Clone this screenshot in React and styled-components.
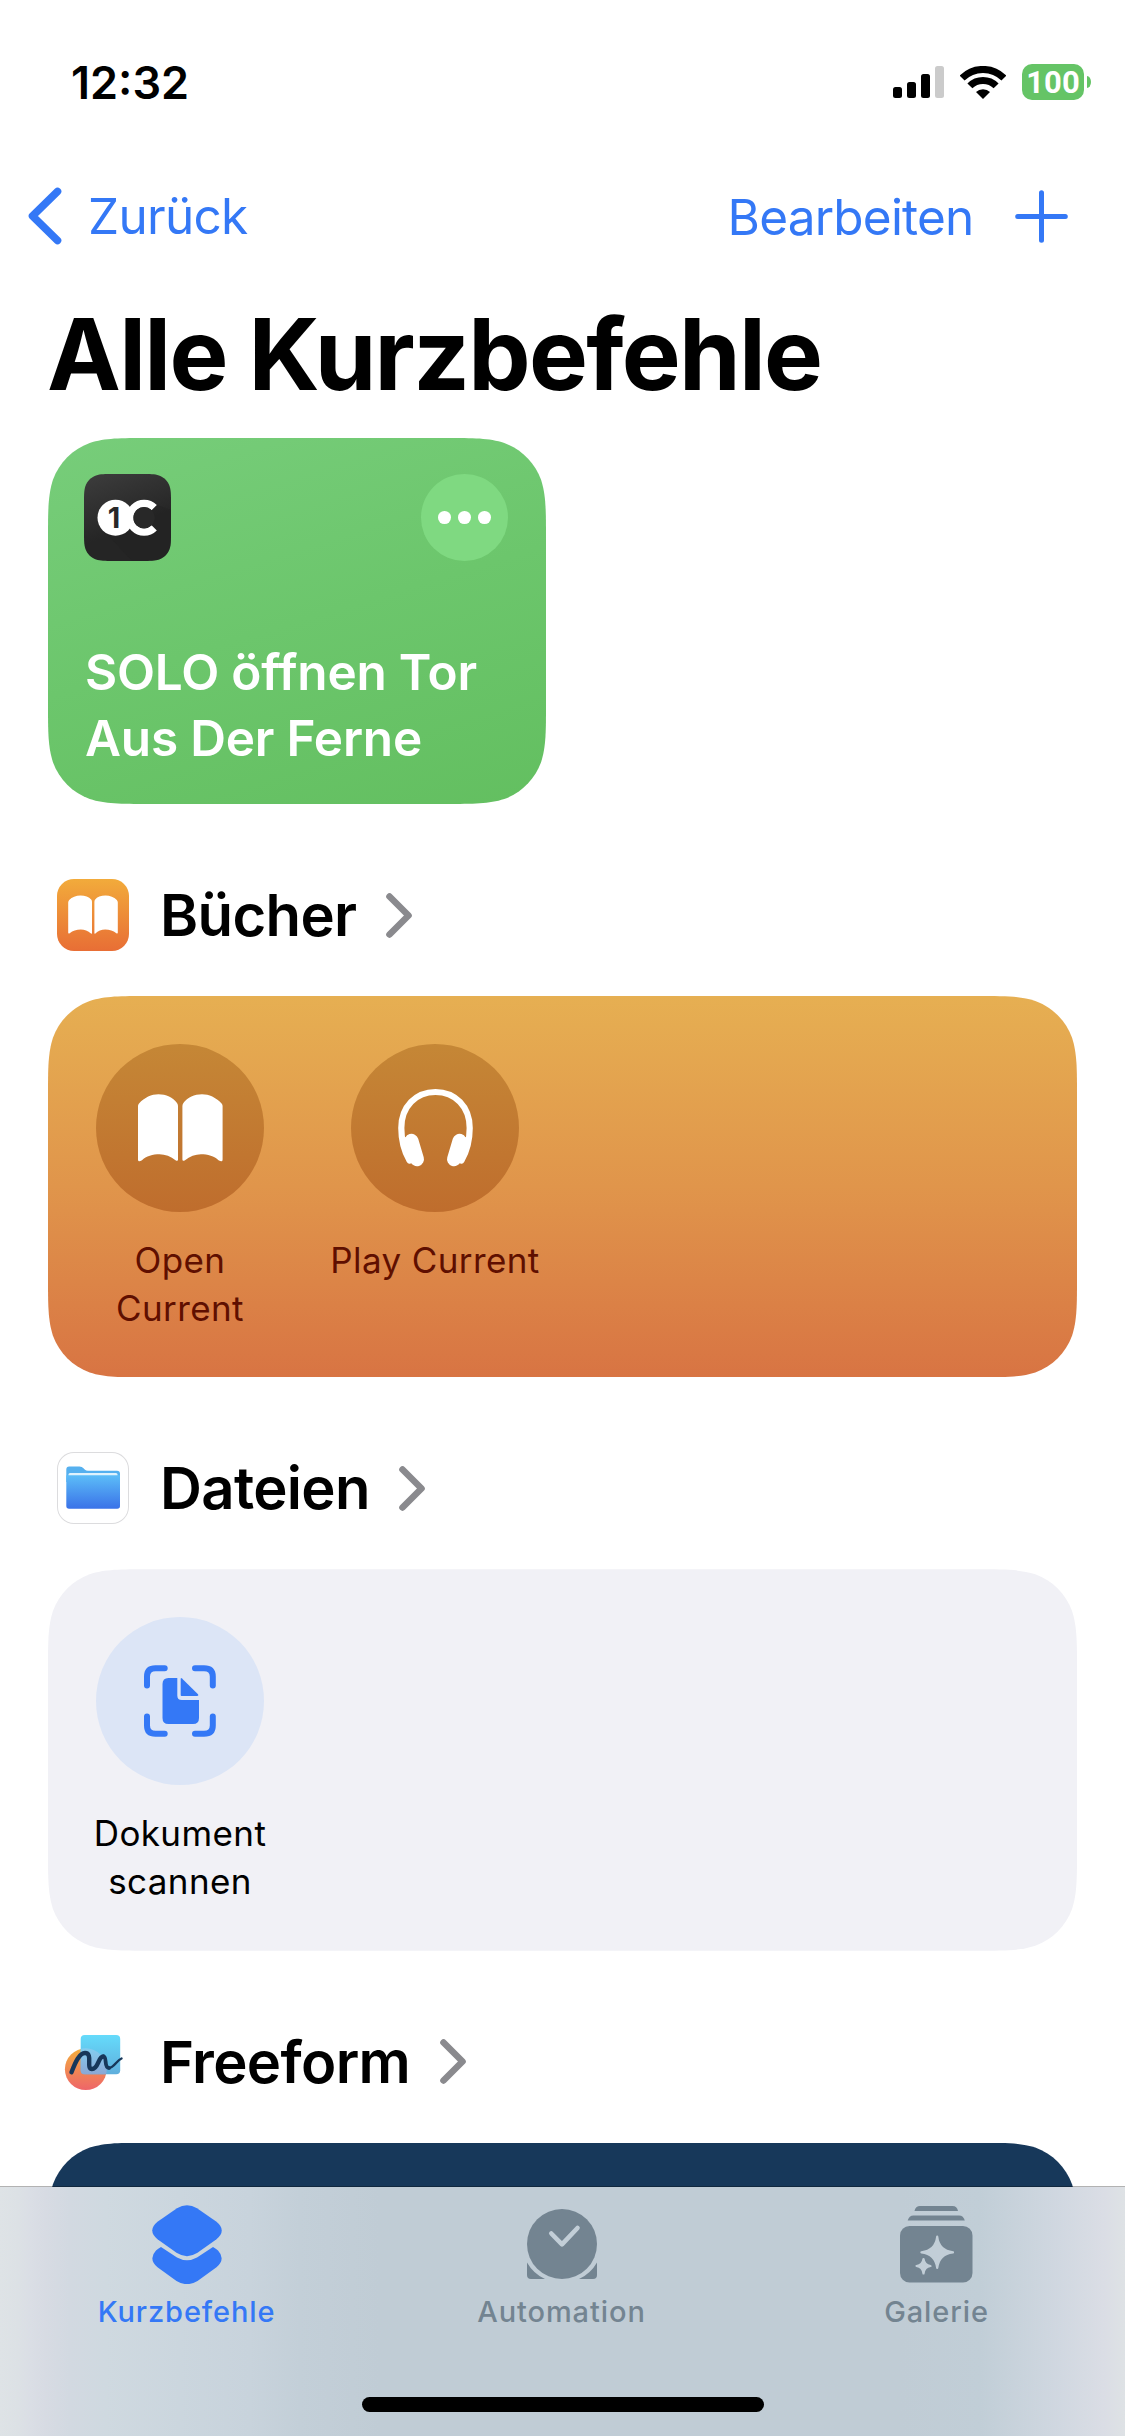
import styled, { createGlobalStyle } from "styled-components";

// continuous-corner rectangle, as a path() string for clip-path
const squircle = (w, h, r) => {
  const a = 1.5287 * r;
  const b = 1.0885 * r;
  const c = 0.8684 * r;
  const d = 0.6315 * r;
  const e = 0.0749 * r;
  const f = 0.3728 * r;
  const g = 0.1691 * r;
  return [
    `M${a} 0 L${w - a} 0`,
    `C${w - b} 0 ${w - c} 0 ${w - d} ${e}`,
    `C${w - f} ${g} ${w - g} ${f} ${w - e} ${d}`,
    `C${w} ${c} ${w} ${b} ${w} ${a}`,
    `L${w} ${h - a}`,
    `C${w} ${h - b} ${w} ${h - c} ${w - e} ${h - d}`,
    `C${w - g} ${h - f} ${w - f} ${h - g} ${w - d} ${h - e}`,
    `C${w - c} ${h} ${w - b} ${h} ${w - a} ${h}`,
    `L${a} ${h}`,
    `C${b} ${h} ${c} ${h} ${d} ${h - e}`,
    `C${f} ${h - g} ${g} ${h - f} ${e} ${h - d}`,
    `C0 ${h - c} 0 ${h - b} 0 ${h - a}`,
    `L0 ${a}`,
    `C0 ${b} 0 ${c} ${e} ${d}`,
    `C${g} ${f} ${f} ${g} ${d} ${e}`,
    `C${c} 0 ${b} 0 ${a} 0Z`,
  ].join(" ");
};

function SignalIcon() {
  return (
    <svg width="51" height="32" viewBox="0 0 51 32">
      <rect x="0" y="21" width="9" height="11" rx="2.5" fill="#000" />
      <rect x="14" y="16" width="9" height="16" rx="2.5" fill="#000" />
      <rect x="28" y="8" width="9" height="24" rx="2.5" fill="#000" />
      <rect x="42" y="0" width="9" height="32" rx="2.5" fill="#cbcbcb" />
    </svg>
  );
}

function WifiIcon() {
  return (
    <svg width="46" height="33" viewBox="0 0 46 33">
      <path d="M2.1 12.1A29.5 29.5 0 0 1 43.9 12.1" fill="none" stroke="#000" strokeWidth="7" />
      <path d="M9.9 19.9A18.5 18.5 0 0 1 36.1 19.9" fill="none" stroke="#000" strokeWidth="7" />
      <path d="M23 33L16 26A10 10 0 0 1 30 26Z" fill="#000" />
    </svg>
  );
}

function SoloLogo() {
  return (
    <svg width="87" height="87" viewBox="0 0 87 87">
      <path d="M20 57L48 87H87V36L73 31Z" fill="#222" opacity="0.45" />
      <circle cx="31.5" cy="43.7" r="18" fill="#fff" />
      <path
        d="M70.2 33.6A14.3 14.3 0 1 0 70.2 53.8"
        fill="none"
        stroke="#fff"
        strokeWidth="7.4"
      />
      <circle cx="60" cy="43.7" r="10.7" fill="#282828" />
      <text x="30" y="54" textAnchor="middle" fontFamily="Inter, sans-serif" fontSize="29" fontWeight="700" fill="#282828">
        1
      </text>
    </svg>
  );
}

function BooksAppIcon() {
  return (
    <svg width="72" height="72" viewBox="0 0 72 72">
      <g fill="#fff">
        <path d="M11.2 23.5Q11.2 22 12.2 21C15 18 19 16.5 23.5 16.5C28 16.5 32 18 34.2 20.6Q35 21.5 35 23V54Q35 55 34 54.4C31 51.8 27.5 50.4 23.8 50.4C19.5 50.4 15.5 51.6 13 54Q11.2 55.4 11.2 53.5Z" />
        <path d="M60.8 23.5Q60.8 22 59.8 21C57 18 53 16.5 48.5 16.5C44 16.5 40 18 38.2 20.6Q37.4 21.5 37.4 23V54Q37.4 55 38.4 54.4C41 51.8 44.5 50.4 48.2 50.4C52.5 50.4 56.5 51.6 59 54Q60.8 55.4 60.8 53.5Z" />
      </g>
    </svg>
  );
}

function FilesAppIcon() {
  return (
    <svg width="72" height="72" viewBox="0 0 72 72">
      <defs>
        <linearGradient id="folder" x1="0" y1="0" x2="0" y2="1">
          <stop offset="0" stopColor="#5cbdf8" />
          <stop offset="1" stopColor="#3a72e8" />
        </linearGradient>
      </defs>
      <path d="M9.3 17.5Q9.3 14.6 12.2 14.6H22.5Q25 14.6 26.5 16.2L28 17.8Q29 18.8 31 18.8H60Q63 18.8 63 21.8V30H9.3Z" fill="#55b0ef" />
      <rect x="11.5" y="21" width="49" height="6" rx="1.5" fill="#dff2fd" />
      <path d="M9.3 23.3H63V54Q63 56.8 60.2 56.8H12.1Q9.3 56.8 9.3 54Z" fill="url(#folder)" />
    </svg>
  );
}

function FreeformAppIcon() {
  return (
    <svg width="72" height="72" viewBox="0 0 72 72">
      <defs>
        <linearGradient id="ffDisc" x1="0" y1="0" x2="0" y2="1">
          <stop offset="0" stopColor="#f3ae3d" />
          <stop offset="1" stopColor="#ee6569" />
        </linearGradient>
        <linearGradient id="ffNote" x1="0" y1="0" x2="0" y2="1">
          <stop offset="0" stopColor="#65dbfb" />
          <stop offset="1" stopColor="#5faedc" />
        </linearGradient>
        <linearGradient id="ffOverlap" x1="0" y1="0" x2="0" y2="1">
          <stop offset="0" stopColor="#84cdf0" />
          <stop offset="0.6" stopColor="#8aa9d6" />
        </linearGradient>
        <clipPath id="ffClip">
          <rect x="23.7" y="9" width="39.5" height="39.3" rx="4" />
        </clipPath>
      </defs>
      <circle cx="28.8" cy="43.2" r="20.9" fill="url(#ffDisc)" />
      <rect x="23.7" y="9" width="39.5" height="39.3" rx="4" fill="url(#ffNote)" />
      <circle cx="28.8" cy="43.2" r="20.9" fill="url(#ffOverlap)" clipPath="url(#ffClip)" />
      <g fill="none" stroke="#17375a" strokeLinecap="round">
        <path d="M14.5 46.3C18.5 35.5 22.5 27 28 27C36.5 27 28.5 43 35 43C41.5 43 41 30.5 46.3 30.5" strokeWidth="4.4" />
        <path d="M46.3 30.500C50.500 30.500 46.500 42 52 42" strokeWidth="3.800" />
        <path d="M52 42C57 42 59.500 34.500 64.500 32.500" strokeWidth="2.400" />
      </g>
    </svg>
  );
}

function BookGlyph() {
  return (
    <svg width="168" height="168" viewBox="0 0 168 168" fill="#fff">
      <path d="M42 62Q42 60.5 43 59.5C48.5 53.5 55.5 50.3 62.5 50.3C70 50.3 77 53.5 81 59Q82 60.3 82 62V115.5Q82 117.6 79.5 116.3C75 112.3 69 110.2 63.5 110.2C57 110.2 50 112 46 116.2Q42 118.8 42 115.5Z" />
      <path d="M126.6 62Q126.6 60.5 125.6 59.5C120 53.5 113 50.3 106 50.3C98.5 50.3 91.5 53.5 87.4 59Q86.4 60.3 86.4 62V115.5Q86.4 117.6 89 116.3C93.5 112.3 99.5 110.2 105 110.2C111.5 110.2 118.5 112 122.5 116.2Q126.6 118.8 126.6 115.5Z" />
    </svg>
  );
}

function HeadphonesGlyph() {
  return (
    <svg width="168" height="168" viewBox="0 0 168 168">
      <path
        d="M58.5 116.5C53 107 50.3 97 50.3 84C50.3 62.5 65 48 84.5 48C104 48 118.7 62.5 118.7 84C118.7 97 116 107 110.5 116.5"
        fill="none"
        stroke="#fff"
        strokeWidth="6.2"
        strokeLinecap="round"
      />
      <path d="M60.5 96.8L66 115.2M108.5 96.8L103 115.2" stroke="#fff" strokeWidth="14" strokeLinecap="round" />
      <path d="M53 93L58 118L66 115L60 94ZM116 93L111 118L103 115L109 94Z" fill="#fff" />
    </svg>
  );
}

function ScanGlyph() {
  return (
    <svg width="168" height="168" viewBox="0 0 168 168">
      <path
        d="M51 68.5V59.5Q51 51.2 59.5 51.2H68.7M99 51.2H108Q116.8 51.2 116.8 59.5V68.5M116.8 99.5V108.5Q116.8 116.8 108 116.8H99M68.7 116.8H59.5Q51 116.8 51 108.5V99.5"
        fill="none"
        stroke="#3478f6"
        strokeWidth="6"
        strokeLinecap="round"
      />
      <path d="M72.5 61H81.3V78.5Q81.3 83 85.8 83H103V101Q103 107 97 107H72.5Q66.5 107 66.5 101V67Q66.5 61 72.5 61Z" fill="#3478f6" />
      <path d="M84.7 62Q84.7 60.5 86 61.5L102 77.3Q103 78.9 101 78.9H85.5Q84.7 78.9 84.7 78Z" fill="#3478f6" />
    </svg>
  );
}

function ShortcutsTabIcon() {
  return (
    <svg width="70" height="79" viewBox="0 0 70 79" fill="currentColor">
      <path d="M25 3.2Q35 -2.8 45 3.2L64.5 16.8Q75 25.5 64.5 34.2L45.5 47.8Q35 54.5 24.5 47.8L5.5 34.2Q-5 25.5 5.5 16.8Z" />
      <path d="M9 42L25 52.5Q35 58 45 52.5L61 42Q64 43.6 66 45.5Q74 54 64.5 62.3L45.5 76Q35 82.3 24.5 76L5.5 62.3Q-4 54 4 45.5Q6 43.6 9 42Z" />
    </svg>
  );
}

function AutomationTabIcon() {
  return (
    <svg width="70" height="70" viewBox="0 0 70 70" fill="currentColor">
      <circle cx="35" cy="35" r="35" />
      <path d="M0 53.5A39.5 39.5 0 0 0 18 70H4Q0 70 0 66Z" />
      <path d="M70 53.5A39.5 39.5 0 0 1 52 70H66Q70 70 70 66Z" />
      <path
        d="M24.3 24.5L35 35.3L50.5 19"
        fill="none"
        stroke="#c2ced7"
        strokeWidth="4.6"
        strokeLinecap="round"
        strokeLinejoin="round"
      />
    </svg>
  );
}

function GalleryTabIcon() {
  return (
    <svg width="73" height="77" viewBox="0 0 73 77" fill="currentColor">
      <path d="M14.5 5Q15.5 0 20 0H52.5Q57 0 58 5Z" />
      <path d="M7.7 14.6Q9 9.4 13.5 9.4H59Q63.5 9.4 64.8 14.6Z" />
      <rect x="0" y="20" width="72.5" height="56.6" rx="9.5" />
      <path
        d="M37.2 30.7Q38.8 44.7 53 46.3Q38.8 48 37.2 62Q35.6 48 21.4 46.3Q35.6 44.7 37.2 30.7Z M23.5 53Q24.3 59.2 30.5 60Q24.3 60.9 23.5 67.5Q22.7 60.9 16.5 60Q22.7 59.2 23.5 53Z"
        fill="#c2ced7"
        stroke="#c2ced7"
        strokeWidth="2.2"
        strokeLinejoin="round"
      />
    </svg>
  );
}

function Section({ icon, title, bordered, background, cardBackground, children }) {
  return (
    <section>
      <SectionHeader>
        <AppIcon $background={background} $bordered={bordered}>
          {icon}
        </AppIcon>
        <SectionTitle>{title}</SectionTitle>
        <svg width="26" height="45" viewBox="0 0 26 45">
          <path d="M3.5 3.5L22.5 22.5L3.5 41.5" fill="none" stroke="#8a8a8e" strokeWidth="6.6" strokeLinecap="round" strokeLinejoin="round" />
        </svg>
      </SectionHeader>
      <ActionCard $background={cardBackground}>{children}</ActionCard>
    </section>
  );
}

function Action({ glyph, label, circle, color }) {
  return (
    <StyledAction>
      <ActionCircle $background={circle}>{glyph}</ActionCircle>
      <ActionLabel $color={color}>{label}</ActionLabel>
    </StyledAction>
  );
}

const tabs = [
  { label: "Kurzbefehle", icon: <ShortcutsTabIcon />, active: true },
  { label: "Automation", icon: <AutomationTabIcon /> },
  { label: "Galerie", icon: <GalleryTabIcon /> },
];

const orangeCircle = "linear-gradient(#c58736, #bf6d2d)";

function App() {
  return (
    <Screen>
      <GlobalStyle />
      <StatusBar>
        <Clock>12:32</Clock>
        <StatusIcons>
          <SignalIcon />
          <WifiIcon />
          <Battery>
            <BatteryLevel>100</BatteryLevel>
            <BatteryCap />
          </Battery>
        </StatusIcons>
      </StatusBar>

      <NavBar>
        <BackButton>
          <svg width="34" height="58" viewBox="0 0 34 58">
            <path d="M29.5 4.5L4.5 29L29.5 53.5" fill="none" stroke="#3478f6" strokeWidth="7.6" strokeLinecap="round" strokeLinejoin="round" />
          </svg>
          <span>Zurück</span>
        </BackButton>
        <NavActions>
          <EditButton>Bearbeiten</EditButton>
          <svg width="53" height="53" viewBox="0 0 53 53">
            <path d="M26.5 2.7V50.3M2.7 26.5H50.3" stroke="#3478f6" strokeWidth="5" strokeLinecap="round" />
          </svg>
        </NavActions>
      </NavBar>

      <Title>Alle Kurzbefehle</Title>

      <Content>
        <ShortcutCard>
          <ShortcutTop>
            <SoloIcon>
              <SoloLogo />
            </SoloIcon>
            <MoreButton>
              <Dot />
              <Dot />
              <Dot />
            </MoreButton>
          </ShortcutTop>
          <ShortcutName>SOLO öffnen Tor Aus Der Ferne</ShortcutName>
        </ShortcutCard>

        <Section
          icon={<BooksAppIcon />}
          title="Bücher"
          background="linear-gradient(#f2ab3b, #e86e35)"
          cardBackground="linear-gradient(#e6af52, #e0954b 50%, #d87443)"
        >
          <Action glyph={<BookGlyph />} label="Open Current" circle={orangeCircle} color="#5f0f00" />
          <Action glyph={<HeadphonesGlyph />} label="Play Current" circle={orangeCircle} color="#5f0f00" />
        </Section>

        <Section icon={<FilesAppIcon />} title="Dateien" background="#fff" bordered cardBackground="#f1f1f6">
          <Action glyph={<ScanGlyph />} label="Dokument scannen" circle="#dce5f6" color="#000" />
        </Section>

        <Section icon={<FreeformAppIcon />} title="Freeform" background="#fff" cardBackground="#17385a" />
      </Content>

      <TabBar>
        <TabList>
          {tabs.map((tab) => (
            <Tab key={tab.label} $active={tab.active}>
              <TabIcon>{tab.icon}</TabIcon>
              <TabLabel>{tab.label}</TabLabel>
            </Tab>
          ))}
        </TabList>
        <HomeIndicator />
      </TabBar>
    </Screen>
  );
}

const GlobalStyle = createGlobalStyle`
  * {
    box-sizing: border-box;
  }
  body {
    margin: 0;
    background: #fff;
  }
  svg {
    display: block;
    flex: none;
  }
`;

const Screen = styled.div`
  position: relative;
  width: 1125px;
  height: 2436px;
  overflow: hidden;
  background: #fff;
  color: #000;
  font-family: Inter, "Liberation Sans", sans-serif;
`;

const StatusBar = styled.header`
  display: flex;
  align-items: center;
  justify-content: space-between;
  height: 164px;
  padding: 0 34px 0 71px;
`;

const Clock = styled.span`
  font-size: 45px;
  font-weight: 600;
`;

const StatusIcons = styled.div`
  display: flex;
  align-items: center;
  gap: 16px;
`;

const Battery = styled.div`
  display: flex;
  align-items: center;
  gap: 3px;
`;

const BatteryLevel = styled.span`
  width: 62px;
  height: 36px;
  border-radius: 10px;
  background: #65c466;
  color: #fff;
  font-family: Roboto, Inter, sans-serif;
  font-size: 31px;
  font-weight: 700;
  line-height: 37px;
  text-align: center;
`;

const BatteryCap = styled.span`
  width: 4px;
  height: 12px;
  border-radius: 0 4px 4px 0 / 0 6px 6px 0;
  background: #65c466;
`;

const NavBar = styled.nav`
  display: flex;
  align-items: center;
  justify-content: space-between;
  height: 104px;
  padding: 0 57px 0 28px;
  color: #3478f6;
  font-size: 49.5px;
`;

const BackButton = styled.div`
  display: flex;
  align-items: center;
  gap: 26px;
  letter-spacing: -0.7px;
`;

const NavActions = styled.div`
  display: flex;
  align-items: center;
  gap: 41.5px;
  padding-top: 1.5px;
`;

const EditButton = styled.span`
  letter-spacing: -0.8px;
`;

const Title = styled.h1`
  height: 170px;
  margin: 0;
  padding-left: 47px;
  font-size: 99px;
  font-weight: 700;
  line-height: 172px;
  letter-spacing: -1.7px;
  white-space: nowrap;
`;

const Content = styled.main`
  padding: 0 48px;
`;

const ShortcutCard = styled.article`
  display: flex;
  flex-direction: column;
  justify-content: space-between;
  width: 498px;
  height: 366px;
  padding: 36px 38px 33px 36px;
  background: linear-gradient(163deg, #77cd7a, #6cc66c 50%, #63bf60);
  clip-path: path("${squircle(498, 366, 66)}");
`;

const ShortcutTop = styled.div`
  display: flex;
  justify-content: space-between;
`;

const SoloIcon = styled.div`
  width: 87px;
  height: 87px;
  background: linear-gradient(160deg, #3d3d3d, #252525 60%);
  clip-path: path("${squircle(87, 87, 19)}");
`;

const MoreButton = styled.div`
  display: flex;
  align-items: center;
  justify-content: center;
  gap: 7.5px;
  width: 87px;
  height: 87px;
  border-radius: 50%;
  background: #7fd981;
`;

const Dot = styled.span`
  width: 12.8px;
  height: 12.8px;
  border-radius: 50%;
  background: #fff;
`;

const ShortcutName = styled.div`
  width: 415px;
  padding-left: 1px;
  color: #fff;
  font-size: 49.5px;
  font-weight: 600;
  line-height: 66px;
  letter-spacing: -0.2px;
`;

const SectionHeader = styled.div`
  display: flex;
  align-items: center;
  height: 192px;
  padding: 30px 0 0 9px;
`;

const AppIcon = styled.div`
  width: 72px;
  height: 72px;
  border-radius: 17px;
  background: ${(props) => props.$background};
  box-shadow: ${(props) => (props.$bordered ? "inset 0 0 0 1px #dcdcde" : "none")};
`;

const SectionTitle = styled.h2`
  margin: 0 29.5px 0 31px;
  font-size: 58px;
  font-weight: 600;
  letter-spacing: -0.65px;
`;

const ActionCard = styled.div`
  display: flex;
  gap: 40px;
  height: 381.33px;
  padding: 48px 24.5px 0;
  background: ${(props) => props.$background};
  clip-path: path("${squircle(1029, 381.33, 66)}");
`;

const StyledAction = styled.div`
  display: flex;
  flex-direction: column;
  align-items: center;
  width: 215px;
`;

const ActionCircle = styled.div`
  width: 168px;
  height: 168px;
  border-radius: 50%;
  background: ${(props) => props.$background};
`;

const ActionLabel = styled.span`
  margin-top: 24px;
  color: ${(props) => props.$color};
  font-size: 35px;
  line-height: 48px;
  letter-spacing: 0.4px;
  text-align: center;
`;

const TabBar = styled.footer`
  position: absolute;
  left: 0;
  right: 0;
  bottom: 0;
  height: 250px;
  border-top: 1px solid rgba(0, 0, 0, 0.3);
  background-clip: padding-box;
  background-image: linear-gradient(
    90deg,
    #dee3e6 0,
    #dce1e5 18px,
    #dadee5 30px,
    #d7dbe3 45px,
    #d2d9e1 70px,
    #cfd9e0 105px,
    #cbd6de 180px,
    #c8d3dc 250px,
    #c3cfd8 300px,
    #c0ccd5 380px,
    #c0ccd5 900px,
    #c1ced7 980px,
    #c9d3dc 1022px,
    #d1d8e1 1062px,
    #d6dbe3 1085px,
    #dadde5 1103px,
    #dee2e5 1125px
  );
`;

const TabList = styled.div`
  display: flex;
  height: 210px;
  margin: 0 1px 0 -1px;
`;

const Tab = styled.div`
  display: flex;
  flex: 1;
  flex-direction: column;
  align-items: center;
  padding-top: 17px;
  color: ${(props) => (props.$active ? "#3478f6" : "#738491")};
`;

const TabIcon = styled.div`
  display: flex;
  align-items: center;
  height: 80px;
`;

const TabLabel = styled.span`
  margin-top: 9.5px;
  font-size: 29px;
  font-weight: 500;
  line-height: 36px;
  letter-spacing: 0.9px;
`;

const HomeIndicator = styled.div`
  width: 402px;
  height: 15px;
  margin: 0 auto;
  border-radius: 8px;
  background: #000;
`;

export default App;
